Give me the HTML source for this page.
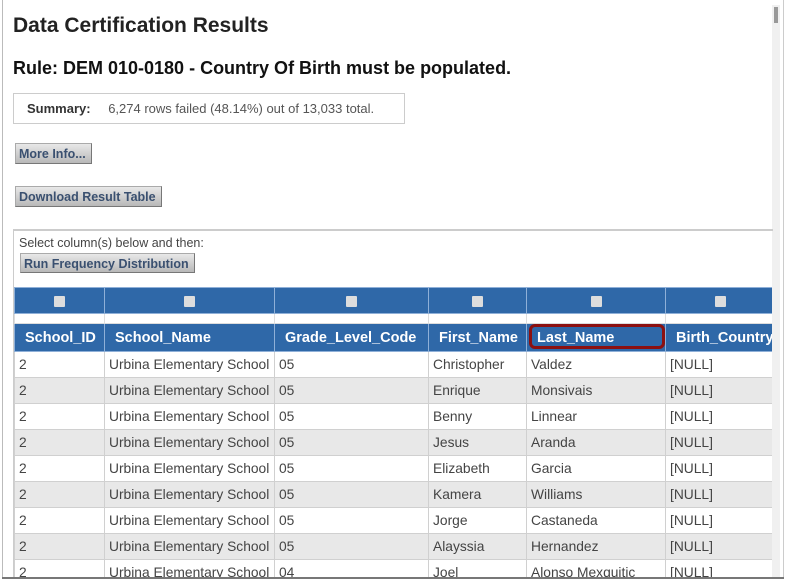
<!DOCTYPE html>
<html><head><style>
*{margin:0;padding:0;box-sizing:border-box}
body{width:785px;height:583px;background:#fff;font-family:"Liberation Sans",Arial,sans-serif;position:relative;overflow:hidden}
.frame{position:absolute;left:2px;top:0;width:782px;height:579px;border-left:1px solid #bbb;border-right:1px solid #ccc}
.sb{position:absolute;left:772px;top:5px;width:8px;height:572px;background:#f0f0f0}
.sb div{position:absolute;left:2px;top:2px;width:4px;height:16px;background:#999}
h1{position:absolute;left:13px;top:14px;font-size:21px;font-weight:bold;color:#222}
h2{position:absolute;left:13px;top:58px;font-size:18px;font-weight:bold;color:#111}
.sum{position:absolute;left:13px;top:93px;width:392px;height:31px;border:1px solid #ccc;font-size:13px;color:#555;padding:7px 0 0 13px}
.sum b{color:#333;margin-right:14px}
.btn{position:absolute;height:21px;background:linear-gradient(#e8e8e8,#b8b8b8);border:1px solid #aaa;border-right-color:#777;border-bottom-color:#777;font-size:12.5px;font-weight:bold;color:#3a5070;padding:3px 2px 0 3px;white-space:nowrap}
.box{position:absolute;left:13px;top:229px;width:760px;height:348px;border-top:2px solid #ccc;border-left:1px solid #ccc}
.sel{position:absolute;left:19px;top:236px;font-size:12.5px;color:#444}
.clip{position:absolute;left:14px;top:287px;width:758px;height:290px;overflow:hidden}
table{border-collapse:collapse;font-size:13.8px;table-layout:fixed;width:761px}
td{border:1px solid #d0d0d0;height:26px;padding:0 4px;color:#444;white-space:nowrap;overflow:hidden}
tr.cb td{background:#2f68a8;height:26px;border:1px solid #8fb0d8;text-align:center}
tr.cb td span{display:inline-block;width:11px;height:11px;background:#ddd;border-radius:1px;vertical-align:middle}
tr.gap td{height:10px;background:#fff;border:1px solid #ddd}
tr.hd td{background:#2f68a8;color:#fff;font-weight:bold;font-size:14.5px;height:28px;border:1px solid #8fb0d8;padding-left:10px}
tr.g td{background:#e8e8e8}
.hl{position:absolute;left:529px;top:324px;width:136px;height:25px;border:3px solid #8c1010;border-radius:6px}
</style></head><body>
<div class="frame"></div>
<div class="sb"><div></div></div>
<h1>Data Certification Results</h1>
<h2>Rule: DEM 010-0180 - Country Of Birth must be populated.</h2>
<div class="sum"><b>Summary:</b> 6,274 rows failed (48.14%) out of 13,033 total.</div>
<div class="btn" style="left:15px;top:143px;width:77px">More Info...</div>
<div class="btn" style="left:15px;top:186px;width:147px">Download Result Table</div>
<div class="box"></div>
<div class="sel">Select column(s) below and then:</div>
<div class="btn" style="left:20px;top:253px;width:175px;height:20px">Run Frequency Distribution</div>
<div class="clip">
<table>
<colgroup><col style="width:90px"><col style="width:170px"><col style="width:154px"><col style="width:98px"><col style="width:139px"><col style="width:110px"></colgroup>
<tr class="cb"><td><span></span></td><td><span></span></td><td><span></span></td><td><span></span></td><td><span></span></td><td><span></span></td></tr>
<tr class="gap"><td></td><td></td><td></td><td></td><td></td><td></td></tr>
<tr class="hd"><td>School_ID</td><td>School_Name</td><td>Grade_Level_Code</td><td>First_Name</td><td>Last_Name</td><td>Birth_Country</td></tr>
<tr><td>2</td><td>Urbina Elementary School</td><td>05</td><td>Christopher</td><td>Valdez</td><td>[NULL]</td></tr>
<tr class="g"><td>2</td><td>Urbina Elementary School</td><td>05</td><td>Enrique</td><td>Monsivais</td><td>[NULL]</td></tr>
<tr><td>2</td><td>Urbina Elementary School</td><td>05</td><td>Benny</td><td>Linnear</td><td>[NULL]</td></tr>
<tr class="g"><td>2</td><td>Urbina Elementary School</td><td>05</td><td>Jesus</td><td>Aranda</td><td>[NULL]</td></tr>
<tr><td>2</td><td>Urbina Elementary School</td><td>05</td><td>Elizabeth</td><td>Garcia</td><td>[NULL]</td></tr>
<tr class="g"><td>2</td><td>Urbina Elementary School</td><td>05</td><td>Kamera</td><td>Williams</td><td>[NULL]</td></tr>
<tr><td>2</td><td>Urbina Elementary School</td><td>05</td><td>Jorge</td><td>Castaneda</td><td>[NULL]</td></tr>
<tr class="g"><td>2</td><td>Urbina Elementary School</td><td>05</td><td>Alayssia</td><td>Hernandez</td><td>[NULL]</td></tr>
<tr><td>2</td><td>Urbina Elementary School</td><td>04</td><td>Joel</td><td>Alonso Mexquitic</td><td>[NULL]</td></tr>
</table>
</div>
<div class="hl"></div>
<div style="position:absolute;left:0;top:579px;width:785px;height:4px;background:#fff"></div>
<div style="position:absolute;left:2px;top:577px;width:782px;height:2px;background:#777"></div>
</body></html>
